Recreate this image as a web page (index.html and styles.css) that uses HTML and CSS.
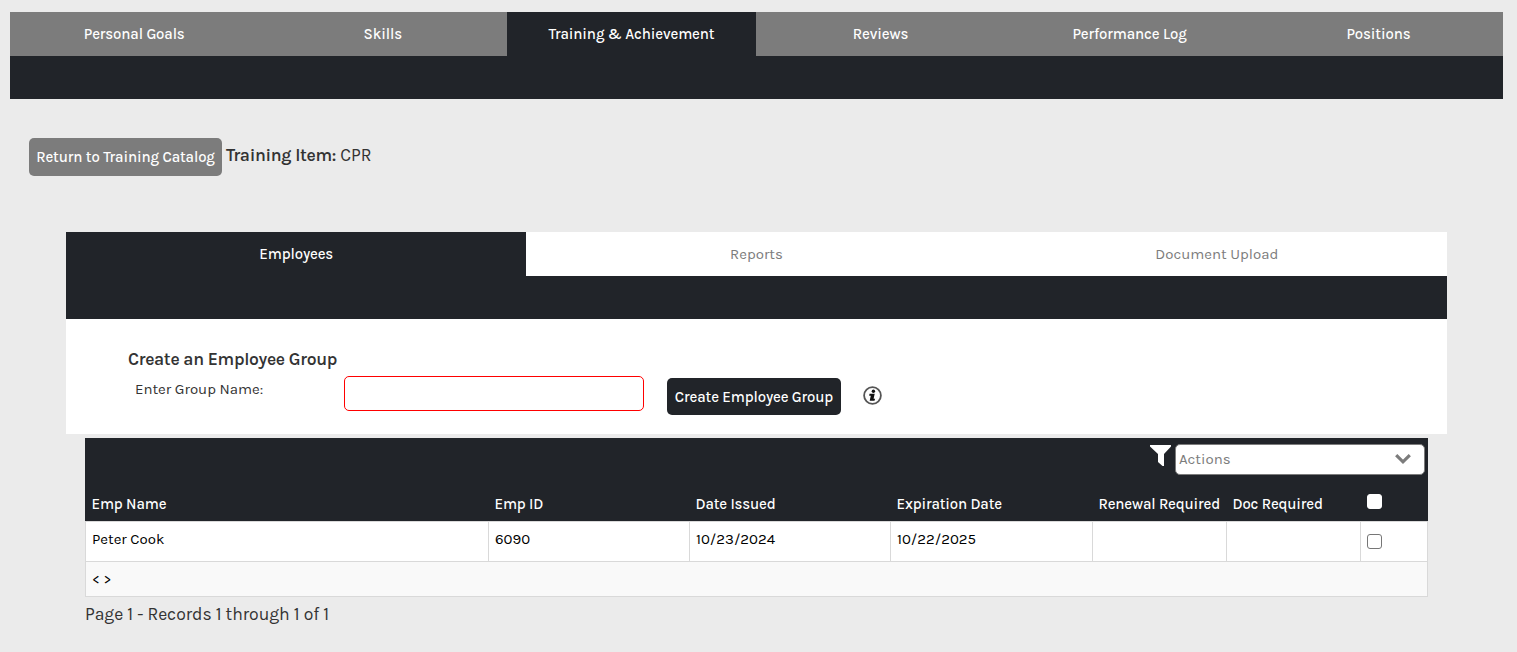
FILE: index.html
```html
<!DOCTYPE html>
<html lang="en">

<head>
    <meta charset="UTF-8">
    <meta name="viewport" content="width=device-width, initial-scale=1.0">
    <title>Training &amp; Achievement</title>
    <link rel="stylesheet" href="styles.css">
</head>

<body>
    <nav class="main-nav">
        <a class="tab">Personal Goals</a>
        <a class="tab">Skills</a>
        <a class="tab active">Training &amp; Achievement</a>
        <a class="tab">Reviews</a>
        <a class="tab">Performance Log</a>
        <a class="tab">Positions</a>
    </nav>
    <div class="nav-bar"></div>

    <div class="item-header">
        <button class="return-button">Return to Training Catalog</button>
        <p class="item-title"><strong>Training Item:</strong> CPR</p>
    </div>

    <main class="content">
        <nav class="sub-nav">
            <a class="tab active">Employees</a>
            <a class="tab">Reports</a>
            <a class="tab">Document Upload</a>
        </nav>
        <div class="nav-bar"></div>

        <section class="group-panel">
            <h2>Create an Employee Group</h2>
            <div class="group-form">
                <label for="groupName">Enter Group Name:</label>
                <input type="text" id="groupName" class="group-input">
                <button class="create-button">Create Employee Group</button>
                <svg class="info-icon" viewBox="0 0 20 20" width="20" height="20">
                    <circle cx="9.5" cy="10.5" r="8.4" fill="#fff" stroke="#555" stroke-width="1.8" />
                    <circle cx="10.4" cy="6.3" r="1.7" fill="#111" />
                    <path d="M6.5 8.8h5.2l-1.1 5h1.5l-.6 2H6.7l1.1-5H6.2z" fill="#111" />
                </svg>
            </div>
        </section>

        <section class="grid-wrap">
            <div class="toolbar">
                <svg class="filter-icon" viewBox="0 0 22 22" width="22" height="22">
                    <path d="M0 0h21v1.5L14 9V21h-1.5L8 17V9L0 1.5z" fill="#fff" />
                </svg>
                <div class="actions-select">
                    <span>Actions</span>
                    <svg viewBox="0 0 18 12" width="18" height="12">
                        <path d="M2.2 2.2L9 8.8l6.8-6.6" fill="none" stroke="#7c7c7c" stroke-width="3.2" />
                    </svg>
                </div>
            </div>
            <table class="employees">
                <colgroup>
                    <col class="col-name">
                    <col class="col-data">
                    <col class="col-data">
                    <col class="col-date">
                    <col class="col-flag">
                    <col class="col-flag">
                    <col>
                </colgroup>
                <thead>
                    <tr>
                        <th>Emp Name</th>
                        <th>Emp ID</th>
                        <th>Date Issued</th>
                        <th>Expiration Date</th>
                        <th>Renewal Required</th>
                        <th>Doc Required</th>
                        <th><input type="checkbox"></th>
                    </tr>
                </thead>
                <tbody>
                    <tr>
                        <td>Peter Cook</td>
                        <td>6090</td>
                        <td>10/23/2024</td>
                        <td>10/22/2025</td>
                        <td></td>
                        <td></td>
                        <td><input type="checkbox"></td>
                    </tr>
                </tbody>
                <tfoot>
                    <tr>
                        <td colspan="7">&lt; &gt;</td>
                    </tr>
                </tfoot>
            </table>
            <p class="records">Page 1 - Records 1 through 1 of 1</p>
        </section>
    </main>
</body>

</html>
```
FILE: styles.css
```css
* {
    box-sizing: border-box;
    margin: 0;
    padding: 0;
}

body {
    padding: 12px 14px 0 10px;
    background-color: #ebebeb;
    color: #333;
    font-family: Karla, Roboto, sans-serif;
    font-size: 15px;
    overflow: hidden;
}

button,
input {
    font-family: inherit;
    font-size: inherit;
}

.main-nav,
.sub-nav {
    display: grid;
    height: 44px;
}

.main-nav {
    grid-template-columns: 248.5px 248.5px repeat(4, 1fr);
}

.sub-nav {
    grid-template-columns: repeat(3, 1fr);
}

.tab {
    text-align: center;
    line-height: 44px;
    white-space: nowrap;
}

.main-nav .tab {
    background-color: #7c7c7c;
    color: #fff;
    font-weight: 500;
    letter-spacing: -0.14px;
}

.sub-nav .tab {
    background-color: #fff;
    color: #7c7c7c;
}

.main-nav .tab.active,
.sub-nav .tab.active {
    background-color: #212429;
    color: #fff;
    font-weight: 500;
    letter-spacing: -0.14px;
}

.nav-bar {
    height: 43px;
    background-color: #212429;
}

.item-header {
    display: flex;
    margin: 39px 0 0 19px;
    height: 38px;
}

.return-button,
.create-button {
    border: none;
    border-radius: 5px;
    color: #fff;
    font-weight: 500;
    letter-spacing: -0.14px;
    white-space: nowrap;
}

.return-button {
    width: 193px;
    height: 38px;
    background-color: #7c7c7c;
}

.item-title {
    margin-left: 4px;
    font-size: 17.6px;
    line-height: 35px;
}

strong,
h2 {
    font-weight: 600;
    letter-spacing: -0.33px;
}

.content {
    margin: 56px 56px 0;
}

.group-panel {
    height: 115px;
    padding: 28px 0 0 62px;
    background-color: #fff;
}

.group-panel h2 {
    font-size: 17.6px;
    line-height: 24px;
}

.group-form {
    display: flex;
    align-items: flex-start;
    margin-top: 5px;
}

.group-form label {
    width: 209px;
    margin-left: 7px;
    line-height: 26px;
}

.group-input {
    width: 300px;
    height: 35px;
    padding: 0 6px;
    border: 1px solid #f00;
    border-radius: 5px;
}

.create-button {
    width: 174px;
    height: 37px;
    margin: 2px 0 0 23px;
    background-color: #212429;
}

.info-icon {
    margin: 9px 0 0 22px;
}

.grid-wrap {
    margin: 4px 19px 0;
}

.toolbar {
    display: flex;
    justify-content: flex-end;
    height: 49px;
    padding: 6px 3px 0 0;
    background-color: #212429;
}

.filter-icon {
    margin: 1px 3px 0 0;
}

.actions-select {
    display: flex;
    align-items: center;
    justify-content: space-between;
    width: 250px;
    height: 31px;
    padding: 0 12px 1px 3px;
    border: 1px solid #7c7c7c;
    border-radius: 5px;
    background-color: #fff;
    color: #7c7c7c;
}

.employees {
    width: 100%;
    table-layout: fixed;
    border-collapse: separate;
    border-spacing: 0;
    color: #000;
}

.col-name {
    width: 403px;
}

.col-data {
    width: 201px;
}

.col-date {
    width: 202px;
}

.col-flag {
    width: 134px;
}

.employees th {
    height: 34px;
    padding: 0 0 0 6.5px;
    background-color: #212429;
    color: #fff;
    font-weight: 500;
    letter-spacing: -0.17px;
    text-align: left;
    white-space: nowrap;
}

.employees td {
    height: 41px;
    padding: 0 0 5px 6px;
    border: solid #d9d9d9;
    border-width: 1px 0 1px 1px;
    background-color: #fff;
}

.employees tbody td:last-child,
.employees tfoot td {
    border-right-width: 1px;
}

.employees tbody td:last-child {
    padding-bottom: 0;
}

.employees tfoot td {
    height: 35px;
    padding-bottom: 0;
    border-top: none;
    background-color: #f9f9f9;
}

.employees input {
    appearance: none;
    display: block;
    width: 15px;
    height: 15px;
    border: 1px solid #767676;
    border-radius: 3px;
    background-color: #fff;
}

.employees th input {
    margin: -5px 0 0 0.5px;
    border-color: #fff;
}

.records {
    margin-top: 6px;
    font-size: 17.6px;
    letter-spacing: -0.05px;
    line-height: 22px;
}
```
